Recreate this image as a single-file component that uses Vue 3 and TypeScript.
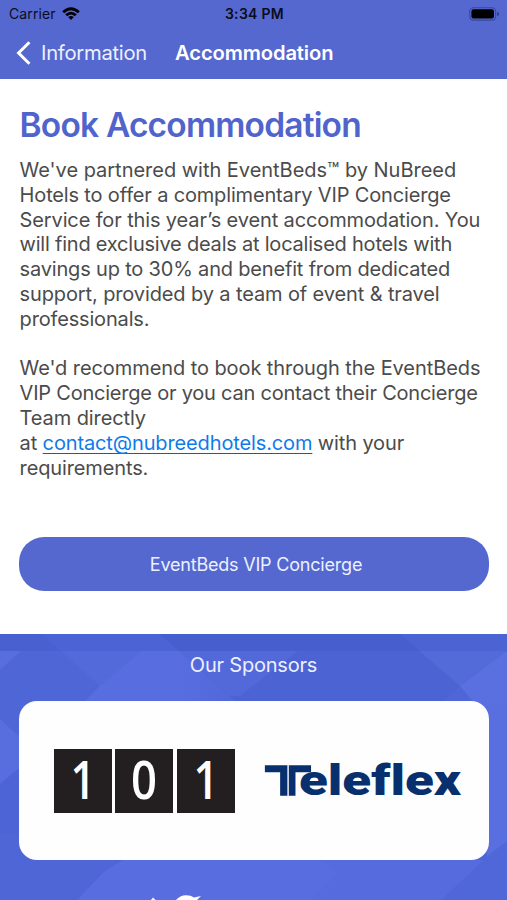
<script setup lang="ts">
interface Line {
  text: string
  tracking: number
}

const intro: Line[] = [
  { text: "We've partnered with EventBeds™ by NuBreed", tracking: -0.02 },
  { text: 'Hotels to offer a complimentary VIP Concierge', tracking: -0.16 },
  { text: 'Service for this year’s event accommodation. You', tracking: -0.13 },
  { text: 'will find exclusive deals at localised hotels with', tracking: -0.22 },
  { text: 'savings up to 30% and benefit from dedicated', tracking: -0.18 },
  { text: 'support, provided by a team of event & travel', tracking: -0.12 },
  { text: 'professionals.', tracking: -0.17 },
]
const advice: Line[] = [
  { text: "We'd recommend to book through the EventBeds", tracking: -0.08 },
  { text: 'VIP Concierge or you can contact their Concierge', tracking: -0.22 },
  { text: 'Team directly', tracking: -0.1 },
]
const digits: string[] = ['1', '0', '1']
</script>

<template>
  <main class="screen">
    <header class="top">
      <div class="status">
        <div class="carrier">
          <span>Carrier</span>
          <svg class="wifi" viewBox="0 0 18 13" width="18" height="13">
            <path d="M0.2 4.2Q9 -3.8 17.8 4.2L15.8 6.2Q9 0.4 2.2 6.2Z" />
            <path d="M3.2 7.2Q9 2.2 14.8 7.2L12.8 9.2Q9 6 5.2 9.2Z" />
            <path d="M6.2 10.1Q9 8 11.8 10.1L9 12.9Z" />
          </svg>
        </div>
        <time class="clock">3:34 PM</time>
        <svg class="battery" viewBox="0 0 31 14" width="31" height="14">
          <rect x="0.7" y="0.7" width="26" height="12.4" rx="3.8" fill="none" stroke="#3a479c" stroke-width="1.1" />
          <rect x="2.4" y="2.3" width="22.6" height="9.2" rx="2.2" fill="#000" />
          <path d="M28.3 4.8Q30.2 5.5 30.2 7T28.3 9.2Z" fill="#30397f" />
        </svg>
      </div>
      <nav class="nav">
        <a class="back">
          <svg viewBox="0 0 16 24" width="16" height="24">
            <path d="M14.4 1.3L3.6 12L14.4 22.7" fill="none" stroke="#fff" stroke-width="3" />
          </svg>
          <span>Information</span>
        </a>
        <strong class="title">Accommodation</strong>
      </nav>
    </header>

    <article class="content">
      <h1>Book Accommodation</h1>
      <p>
        <span v-for="line in intro" :key="line.text" class="line" :style="{ letterSpacing: line.tracking + 'px' }">{{ line.text }}</span>
      </p>
      <p>
        <span v-for="line in advice" :key="line.text" class="line" :style="{ letterSpacing: line.tracking + 'px' }">{{ line.text }}</span>
        <span class="line">at <a class="mail">contact@nubreedhotels.com</a> with your</span>
        <span class="line">requirements.</span>
      </p>
      <button class="cta" type="button">EventBeds VIP Concierge</button>
    </article>

    <section class="sponsors">
      <svg class="pattern" viewBox="0 0 507 267" width="507" height="267">
        <defs>
          <linearGradient id="facet" x1="0" y1="0" x2="1" y2="0">
            <stop offset="0" stop-color="#586ee0" />
            <stop offset="0.55" stop-color="#586ee0" />
            <stop offset="1" stop-color="#5066d8" />
          </linearGradient>
        </defs>
        <rect width="507" height="267" fill="#4f66d7" />
        <path d="M42 0H160L236 68H180L100 52Z" fill="#536adb" />
        <path d="M0 17H21L0 36Z" fill="#586ede" />
        <path d="M142 17H255L236 68H84L100 52Z" fill="url(#facet)" />
        <path d="M160 0H400L460 52L442 68H236L216 50L179 17Z" fill="#4c63d4" />
        <path d="M179 17H298L240 62L230 62Z" fill="#5369da" />
        <path d="M400 0H507V17L460 52Z" fill="#536ad9" />
        <path d="M507 17V100H500L460 52Z" fill="#5a70e0" />
        <path d="M0 85L22 105V135L0 150Z" fill="#586edf" />
        <path d="M0 150L30 125V200H0Z" fill="#4d64d7" />
        <path d="M487 70H507V235H487Z" fill="#596fe0" />
        <path d="M105 237L123 226H320L345 240L310 267H76Z" fill="#586ee0" />
        <path d="M320 226H490L440 267H310L338 239Z" fill="#566cde" />
        <path d="M490 220L507 207V267H440Z" fill="#5067da" />
        <rect width="507" height="17" fill="#354cbd" opacity="0.22" />
      </svg>
      <h2>Our Sponsors</h2>
      <div class="card">
        <div class="tiles">
          <svg v-for="(digit, i) in digits" :key="i" class="tile" viewBox="0 0 58 64" width="58" height="64">
            <rect width="58" height="64" fill="#231f20" />
            <text x="29" y="50" text-anchor="middle" :textLength="digit === '0' ? 26 : 25" lengthAdjust="spacingAndGlyphs">{{ digit }}</text>
          </svg>
        </div>
        <svg class="teleflex" viewBox="0 0 200 36" width="200" height="36">
          <text class="initial" x="0" y="31.5" textLength="46" lengthAdjust="spacingAndGlyphs">T</text>
          <rect x="22.4" y="0" width="1.4" height="34" fill="#fefefe" />
          <text x="34" y="32" textLength="162" lengthAdjust="spacingAndGlyphs">eleflex</text>
        </svg>
      </div>
      <svg class="peek" viewBox="0 0 60 6" width="60" height="6">
        <path d="M1 6L3 3.4L5.5 6Z" />
        <path d="M26 6Q30 1.2 36 1.2Q41 1.2 44 3.4L51 2L47 6Z" />
      </svg>
    </section>
  </main>
</template>

<style>
body {
  background: #fff;
}
</style>

<style scoped>
.screen {
  width: 507px;
  height: 900px;
  overflow: hidden;
  display: flex;
  flex-direction: column;
  font-family: Inter, "Liberation Sans", sans-serif;
  background: #fff;
}
.top {
  height: 79px;
  flex: none;
  background: #5468d0;
}
.status {
  height: 27px;
  padding: 0 7px 0 9px;
  display: grid;
  grid-template-columns: 1fr auto 1fr;
  align-items: center;
  color: #0b0d1c;
  font-size: 14px;
}
.carrier {
  display: flex;
  align-items: center;
  gap: 6px;
  letter-spacing: 0.1px;
}
.wifi {
  fill: #000;
}
.clock {
  font-weight: 600;
  font-size: 14px;
  letter-spacing: 0.3px;
}
.battery {
  justify-self: end;
}
.nav {
  height: 51px;
  display: flex;
  align-items: center;
  padding-left: 15px;
  color: #fff;
  font-size: 20.2px;
}
.back {
  display: flex;
  align-items: center;
  gap: 10px;
  width: 160px;
  color: #edf0ff;
  letter-spacing: -0.25px;
}
.title {
  font-weight: 600;
  letter-spacing: -0.13px;
}
.content {
  height: 555px;
  flex: none;
  box-sizing: border-box;
  padding: 26px 18px 0 19.6px;
}
h1 {
  margin: 0;
  color: #5064cc;
  font-size: 33.5px;
  line-height: 40px;
  font-weight: 600;
  letter-spacing: -0.82px;
}
p {
  margin: 13px 0 0;
  color: #4b4b4b;
  font-size: 20px;
  line-height: 24.8px;
  letter-spacing: -0.13px;
}
p + p {
  margin-top: 24.8px;
}
.line {
  display: block;
  white-space: nowrap;
}
.mail {
  color: #0f7bea;
  text-decoration: underline;
  text-decoration-color: #31577f;
  text-decoration-thickness: 1px;
  text-underline-offset: 3px;
  text-decoration-skip-ink: none;
}
.cta {
  display: block;
  width: 470px;
  height: 54px;
  margin: 57px 0 0 -0.6px;
  padding: 0 0 0 4px;
  border: 0;
  border-radius: 25px;
  background: #5468d0;
  color: #edf0ff;
  font-family: inherit;
  font-size: 18px;
  letter-spacing: -0.2px;
}
.sponsors {
  position: relative;
  height: 266px;
  flex: none;
}
.pattern {
  position: absolute;
  inset: 0;
}
h2 {
  position: relative;
  margin: 0;
  padding-top: 19px;
  text-align: center;
  color: #edf0ff;
  font-size: 20px;
  font-weight: 400;
  line-height: 25px;
  letter-spacing: -0.2px;
}
.card {
  position: relative;
  width: 470px;
  height: 159px;
  margin: 23px 0 0 19px;
  box-sizing: border-box;
  padding-left: 35px;
  border-radius: 18px;
  background: #fefefe;
  display: flex;
  align-items: center;
}
.tiles {
  display: flex;
  gap: 3.3px;
  width: 211px;
}
.tile {
  overflow: visible;
}
.tile text {
  fill: #fff;
  font-family: "Open Sans", sans-serif;
  font-size: 52px;
  font-weight: 600;
}
.teleflex {
  fill: #08306e;
  overflow: visible;
}
.teleflex text {
  font-family: Roboto, sans-serif;
  font-size: 42px;
  font-weight: 900;
  font-variant-ligatures: none;
}
.teleflex .initial {
  font-size: 41px;
  stroke: #08306e;
  stroke-width: 1.6px;
}
.peek {
  position: absolute;
  left: 150px;
  bottom: 0;
  fill: #fff;
}
</style>
